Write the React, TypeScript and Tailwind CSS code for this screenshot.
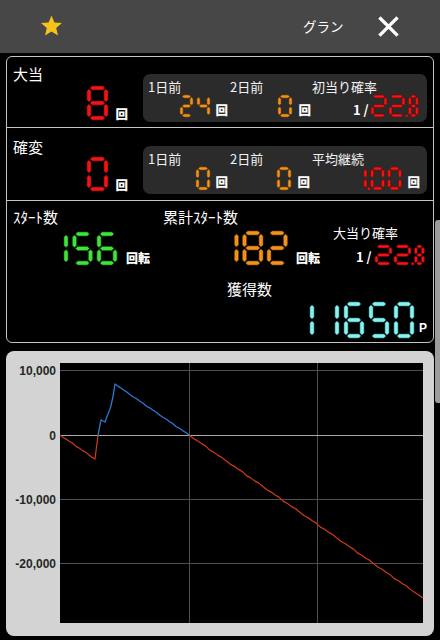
import React from 'react';

const SEGS: Record<string, string> = {
  '0': 'abcdef',
  '1': 'bc',
  '2': 'abged',
  '3': 'abgcd',
  '4': 'fgbc',
  '5': 'afgcd',
  '6': 'afgedc',
  '7': 'abc',
  '8': 'abcdefg',
  '9': 'abcdfg',
};

type SSProps = {
  text: string;
  h: number;
  w: number;
  t: number;
  gap: number;
  color: string;
  edge: string;
  narrow?: number;
  className?: string;
};

function SevenSeg({ text, h, w, t, gap, color, edge, narrow, className = '' }: SSProps) {
  const polys: string[] = [];
  const dots: { x: number; w: number }[] = [];
  let x = 0;
  let afterDot = false;
  const chars = text.split('');
  chars.forEach((ch, i) => {
    if (ch === '.') {
      x -= gap;
      x += 0.5;
      const pw = Math.max(2, t * 0.8);
      dots.push({ x, w: pw });
      x += pw + 0.5;
      afterDot = true;
      return;
    }
    const dw = afterDot && narrow ? narrow : w;
    const g = t * 0.28;
    const L = t / 2;
    const R = dw - t / 2;
    const T = t / 2;
    const M = h / 2;
    const B = h - t / 2;
    const hs = (x1: number, x2: number, cy: number) =>
      `${x + x1},${cy} ${x + x1 + t / 2},${cy - t / 2} ${x + x2 - t / 2},${cy - t / 2} ${x + x2},${cy} ${x + x2 - t / 2},${cy + t / 2} ${x + x1 + t / 2},${cy + t / 2}`;
    const vs = (cx: number, y1: number, y2: number) =>
      `${x + cx},${y1} ${x + cx + t / 2},${y1 + t / 2} ${x + cx + t / 2},${y2 - t / 2} ${x + cx},${y2} ${x + cx - t / 2},${y2 - t / 2} ${x + cx - t / 2},${y1 + t / 2}`;
    const segs = SEGS[ch] || '';
    for (const s of segs) {
      if (s === 'a') polys.push(hs(L + g, R - g, T));
      if (s === 'g') polys.push(hs(L + g, R - g, M));
      if (s === 'd') polys.push(hs(L + g, R - g, B));
      if (s === 'f') polys.push(vs(L, T + g, M - g));
      if (s === 'b') polys.push(vs(R, T + g, M - g));
      if (s === 'e') polys.push(vs(L, M + g, B - g));
      if (s === 'c') polys.push(vs(R, M + g, B - g));
    }
    x += dw;
    if (i < chars.length - 1) x += gap;
  });
  const total = x;
  return (
    <svg
      role="img"
      aria-label={text}
      width={total}
      height={h}
      viewBox={`0 0 ${total} ${h}`}
      className={`block shrink-0 overflow-visible ${className}`}
    >
      <title>{text}</title>
      {polys.map((p, i) => (
        <polygon key={i} points={p} fill={color} stroke={edge} strokeWidth={0.6} strokeLinejoin="round" />
      ))}
      {dots.map((d, i) => (
        <rect key={`d${i}`} x={d.x} y={h - d.w} width={d.w} height={d.w} fill={color} stroke={edge} strokeWidth={0.4} />
      ))}
    </svg>
  );
}

const RED = { color: '#f01414', edge: '#7a0000' };
const ORANGE = { color: '#f0921c', edge: '#7a4300' };
const GREEN = { color: '#3ee43a', edge: '#0f6a0f' };
const CYAN = { color: '#8af0f0', edge: '#2a7f80' };

function Kai({ className = '' }: { className?: string }) {
  return <span className={`text-[12.5px] font-black leading-none text-white ${className}`}>回</span>;
}

function Header() {
  return (
    <div className="flex h-[53px] items-center bg-[#474747] pb-[1px]">
      <svg className="ml-[39px] shrink-0" width="25" height="24" viewBox="0 0 24 24">
        <polygon
          points="12,1.5 14.9,8.4 22.5,9 16.7,13.9 18.5,21.5 12,17.4 5.5,21.5 7.3,13.9 1.5,9 9.1,8.4"
          fill="#f7c31b"
        />
      </svg>
      <div className="ml-[239px] w-[41px] shrink-0 whitespace-nowrap text-[13.5px] leading-[18px] text-white">
        グラン
      </div>
      <svg className="ml-[34px] shrink-0" width="21" height="21" viewBox="0 0 20 20">
        <path d="M2.5 2.5 L17.5 17.5 M17.5 2.5 L2.5 17.5" stroke="#ffffff" strokeWidth="3.2" strokeLinecap="square" />
      </svg>
    </div>
  );
}

function SubLabel({ children }: { children: React.ReactNode }) {
  return <div className="pt-[5px] text-[13px] leading-[15px] text-[#f2f2f2]">{children}</div>;
}

function Section1() {
  return (
    <div className="flex h-[71px] border-b border-[#c4c4c4]">
      <div className="flex w-[136px] shrink-0 flex-col">
        <div className="pl-[6px] pt-[8px] text-[15px] leading-[18px] text-white">大当</div>
        <div className="mt-[3px] flex items-end justify-end pr-[15px]">
          <SevenSeg text="8" h={34} w={21} t={4} gap={4} {...RED} />
          <Kai className="ml-[7px]" />
        </div>
      </div>
      <div className="mr-[6px] mt-[17px] grid h-[48px] flex-1 grid-cols-[82px_82px_1fr] rounded-[7px] bg-[#2b2b2b] pl-[5px]">
        <div className="flex flex-col">
          <SubLabel>1日前</SubLabel>
          <div className="mt-[1px] flex items-end justify-end pr-[2px]">
            <SevenSeg text="24" h={22} w={13} t={3} gap={4} {...ORANGE} />
            <Kai className="mb-[1px] ml-[5px]" />
          </div>
        </div>
        <div className="flex flex-col">
          <SubLabel>2日前</SubLabel>
          <div className="mt-[1px] flex items-end justify-end pr-[1px]">
            <SevenSeg text="0" h={22} w={14} t={3} gap={4} {...ORANGE} />
            <Kai className="mb-[1px] ml-[6px]" />
          </div>
        </div>
        <div className="flex flex-col">
          <SubLabel>初当り確率</SubLabel>
          <div className="mt-[1px] flex items-end justify-end pr-[9px]">
            <span className="mb-[1px] text-[13px] font-bold leading-none text-white">1 /</span>
            <SevenSeg className="ml-[2px]" text="22.8" h={22} w={16} narrow={10} t={3} gap={2} {...RED} />
          </div>
        </div>
      </div>
    </div>
  );
}

function Section2() {
  return (
    <div className="flex h-[73px] border-b border-[#c4c4c4]">
      <div className="flex w-[136px] shrink-0 flex-col">
        <div className="pl-[6px] pt-[9.5px] text-[15px] leading-[18px] text-white">確変</div>
        <div className="mt-[1.5px] flex items-end justify-end pr-[15px]">
          <SevenSeg text="0" h={34} w={21} t={4} gap={4} {...RED} />
          <Kai className="ml-[7px]" />
        </div>
      </div>
      <div className="mr-[6px] mt-[18px] grid h-[48px] flex-1 grid-cols-[82px_82px_1fr] rounded-[7px] bg-[#2b2b2b] pl-[5px]">
        <div className="flex flex-col">
          <SubLabel>1日前</SubLabel>
          <div className="mt-[1px] flex items-end justify-end pr-[2px]">
            <SevenSeg text="0" h={23} w={14} t={3} gap={4} {...ORANGE} />
            <Kai className="mb-[2px] ml-[5px]" />
          </div>
        </div>
        <div className="flex flex-col">
          <SubLabel>2日前</SubLabel>
          <div className="mt-[1px] flex items-end justify-end pr-[2px]">
            <SevenSeg text="0" h={23} w={14} t={3} gap={4} {...ORANGE} />
            <Kai className="mb-[2px] ml-[6px]" />
          </div>
        </div>
        <div className="flex flex-col">
          <SubLabel>平均継続</SubLabel>
          <div className="mt-[1px] flex items-end justify-end pr-[7px]">
            <SevenSeg text="1.00" h={23} w={14} t={3.2} gap={3} {...RED} />
            <Kai className="mb-[2px] ml-[6px]" />
          </div>
        </div>
      </div>
    </div>
  );
}

function Section3() {
  return (
    <div className="flex h-[141px] flex-col">
      <div className="flex">
        <div className="flex w-[326px] shrink-0 flex-col">
          <div className="flex pt-[6.5px] text-[15px] leading-[18px] text-white">
            <span className="w-[156px] pl-[6px]">ｽﾀｰﾄ数</span>
            <span>累計ｽﾀｰﾄ数</span>
          </div>
          <div className="mt-[5px] flex items-end">
            <SevenSeg className="ml-[41px]" text="156" h={33} w={20} t={4} gap={4.5} {...GREEN} />
            <span className="mb-[1px] ml-[9px] text-[12px] font-black leading-none text-white">回転</span>
            <SevenSeg className="ml-[68px]" text="182" h={34} w={20.5} t={4} gap={4} {...ORANGE} />
            <span className="mb-[1px] ml-[8.5px] text-[12px] font-black leading-none text-white">回転</span>
          </div>
        </div>
        <div className="flex flex-1 flex-col pt-[24px]">
          <span className="text-[13px] leading-[15px] text-white">大当り確率</span>
          <div className="mt-[5px] flex items-end justify-end pr-[9px]">
            <span className="mb-[2px] text-[13px] font-bold leading-none text-white">1 /</span>
            <SevenSeg className="ml-[3px]" text="22.8" h={20} w={17} narrow={10} t={3} gap={2} {...RED} />
          </div>
        </div>
      </div>
      <div className="ml-[220px] mt-[14.5px] text-[15px] leading-[18px] text-white">獲得数</div>
      <div className="mt-[4.5px] flex items-end justify-end pr-[6px]">
        <SevenSeg text="11650" h={36} w={20} t={4} gap={5} {...CYAN} />
        <span className="mb-[4px] ml-[5px] font-['Liberation_Sans',sans-serif] text-[12px] font-bold leading-none text-white">P</span>
      </div>
    </div>
  );
}

function jitter(pts: [number, number][], step: number, amp: number): string {
  const out: [number, number][] = [];
  for (let i = 0; i < pts.length - 1; i++) {
    const [x1, y1] = pts[i];
    const [x2, y2] = pts[i + 1];
    const len = Math.hypot(x2 - x1, y2 - y1);
    const n = Math.max(1, Math.round(len / step));
    for (let k = 0; k < n; k++) {
      const t = k / n;
      const noise = k === 0 ? 0 : amp * Math.sin(k * 2.1 + i * 1.3) * Math.cos(k * 0.7);
      out.push([x1 + (x2 - x1) * t, y1 + (y2 - y1) * t + noise]);
    }
  }
  out.push(pts[pts.length - 1]);
  return out.map(([x, y]) => `${x.toFixed(2)},${y.toFixed(2)}`).join(' ');
}

function Chart() {
  const red1 = jitter([[54, 84], [89, 108], [92, 84]], 4, 0.6);
  const blue = jitter(
    [[92, 84], [95, 69], [99, 71], [104.7, 56], [106.7, 47], [109, 33], [111, 34.5], [183, 84]],
    4,
    0.5,
  );
  const red2 = jitter([[183, 84], [417, 247]], 5, 0.7);
  const labels: [string, number][] = [
    ['10,000', 19],
    ['0', 84],
    ['-10,000', 148],
    ['-20,000', 212],
  ];
  return (
    <div className="mt-[8px] h-[285px] rounded-[8px] bg-[#d3d3d3]">
      <svg width="428" height="285" viewBox="0 0 428 285" className="block">
        <rect x="54" y="12" width="363" height="260" fill="#000000" />
        {[19, 148, 212].map((y) => (
          <line key={y} x1="54" x2="417" y1={y + 0.5} y2={y + 0.5} stroke="#4f4f4f" strokeWidth="1" />
        ))}
        {[183, 311].map((x) => (
          <line key={x} x1={x + 0.5} x2={x + 0.5} y1="12" y2="272" stroke="#4f4f4f" strokeWidth="1" />
        ))}
        <line x1="54" x2="417" y1="84.5" y2="84.5" stroke="#a8a8a8" strokeWidth="1" />
        <polyline points={red1} fill="none" stroke="#d33a14" strokeWidth="1.2" strokeLinejoin="round" />
        <polyline points={red2} fill="none" stroke="#d33a14" strokeWidth="1.2" strokeLinejoin="round" />
        <polyline points={blue} fill="none" stroke="#2a7bd2" strokeWidth="1.3" strokeLinejoin="round" />
        {labels.map(([t, y]) => (
          <text
            key={t}
            x="50"
            y={y + 4.5}
            textAnchor="end"
            fontFamily="'Liberation Sans', Arial, sans-serif"
            fontWeight="700"
            fontSize="12"
            fill="#262626"
          >
            {t}
          </text>
        ))}
      </svg>
    </div>
  );
}

export default function App() {
  return (
    <div className="relative h-[640px] w-[440px] overflow-hidden bg-black font-['Noto_Sans_CJK_JP','Noto_Sans',sans-serif] text-white">
      <Header />
      <div className="px-[6px] pt-[3px]">
        <div className="rounded-[6px] border border-[#c4c4c4]">
          <Section1 />
          <Section2 />
          <Section3 />
        </div>
        <Chart />
      </div>
      <div className="absolute right-0 top-[220px] h-[183px] w-[5px] rounded-l-[3px] bg-[#9c9c9c]" />
    </div>
  );
}
